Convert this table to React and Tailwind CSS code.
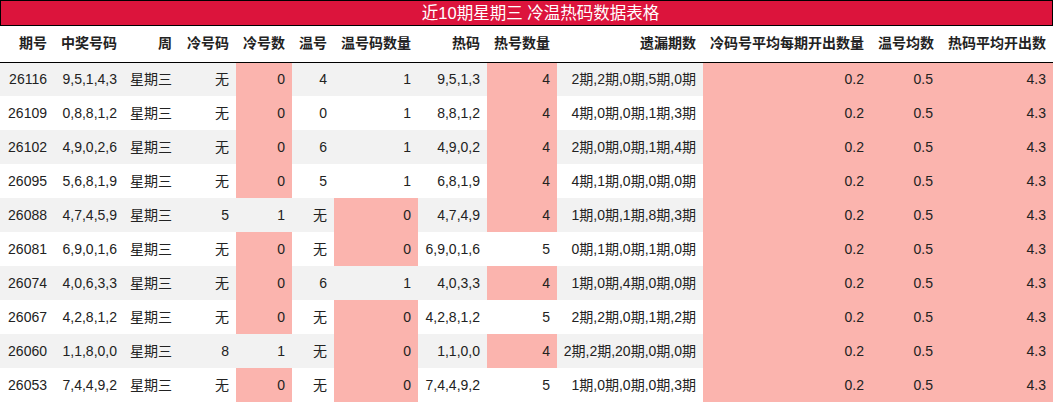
import React from "react";

const cols = [
  { h: "期号", w: 54 },
  { h: "中奖号码", w: 70 },
  { h: "周", w: 55 },
  { h: "冷号码", w: 57 },
  { h: "冷号数", w: 56 },
  { h: "温号", w: 42 },
  { h: "温号码数量", w: 84 },
  { h: "热码", w: 69 },
  { h: "热号数量", w: 70 },
  { h: "遗漏期数", w: 146 },
  { h: "冷码号平均每期开出数量", w: 168 },
  { h: "温号均数", w: 69 },
  { h: "热码平均开出数", w: 113 },
];

const rows = [
  ["26116", "9,5,1,4,3", "星期三", "无", "0", "4", "1", "9,5,1,3", "4", "2期,2期,0期,5期,0期"],
  ["26109", "0,8,8,1,2", "星期三", "无", "0", "0", "1", "8,8,1,2", "4", "4期,0期,0期,1期,3期"],
  ["26102", "4,9,0,2,6", "星期三", "无", "0", "6", "1", "4,9,0,2", "4", "2期,0期,0期,1期,4期"],
  ["26095", "5,6,8,1,9", "星期三", "无", "0", "5", "1", "6,8,1,9", "4", "4期,1期,0期,0期,0期"],
  ["26088", "4,7,4,5,9", "星期三", "5", "1", "无", "0", "4,7,4,9", "4", "1期,0期,1期,8期,3期"],
  ["26081", "6,9,0,1,6", "星期三", "无", "0", "无", "0", "6,9,0,1,6", "5", "0期,1期,0期,1期,0期"],
  ["26074", "4,0,6,3,3", "星期三", "无", "0", "6", "1", "4,0,3,3", "4", "1期,0期,4期,0期,0期"],
  ["26067", "4,2,8,1,2", "星期三", "无", "0", "无", "0", "4,2,8,1,2", "5", "2期,2期,0期,1期,2期"],
  ["26060", "1,1,8,0,0", "星期三", "8", "1", "无", "0", "1,1,0,0", "4", "2期,2期,20期,0期,0期"],
  ["26053", "7,4,4,9,2", "星期三", "无", "0", "无", "0", "7,4,4,9,2", "5", "1期,0期,0期,0期,3期"],
];

const font = {
  fontFamily: '"Liberation Sans", "Noto Sans CJK SC", sans-serif',
};

export default function App() {
  return (
    <div className="w-[1053px] bg-white text-[#222]" style={font}>
      <div className="h-[26px] border border-black bg-[#dc143c] text-white text-[16.5px] leading-[24px] text-center pl-[28px]">
        近10期星期三 冷温热码数据表格
      </div>
      <table className="table-fixed border-collapse w-[1053px] text-[14px]">
        <colgroup>
          {cols.map((c, i) => (
            <col key={i} style={{ width: c.w }} />
          ))}
        </colgroup>
        <thead>
          <tr className="h-[36px] border-b border-black">
            {cols.map((c, i) => (
              <th key={i} className="px-[7px] text-right font-bold whitespace-nowrap p-0 pr-[7px]">
                {c.h}
              </th>
            ))}
          </tr>
        </thead>
        <tbody>
          {rows.map((r, ri) => {
            const gray = ri % 2 === 0;
            const pinkCold = r[4] === "0";
            const pinkWarm = r[6] === "0";
            const pinkHot = r[8] === "4";
            const base = gray ? "bg-[#f2f2f2]" : "bg-white";
            const cell = (v, pink, k) => (
              <td
                key={k}
                className={`h-[34px] p-0 pr-[7px] text-right whitespace-nowrap ${pink ? "bg-[#fbb4ae]" : base}`}
              >
                {v}
              </td>
            );
            return (
              <tr key={ri}>
                {cell(r[0], false, 0)}
                {cell(r[1], false, 1)}
                {cell(r[2], false, 2)}
                {cell(r[3], false, 3)}
                {cell(r[4], pinkCold, 4)}
                {cell(r[5], false, 5)}
                {cell(r[6], pinkWarm, 6)}
                {cell(r[7], false, 7)}
                {cell(r[8], pinkHot, 8)}
                {cell(r[9], false, 9)}
                {cell("0.2", true, 10)}
                {cell("0.5", true, 11)}
                {cell("4.3", true, 12)}
              </tr>
            );
          })}
        </tbody>
      </table>
    </div>
  );
}
